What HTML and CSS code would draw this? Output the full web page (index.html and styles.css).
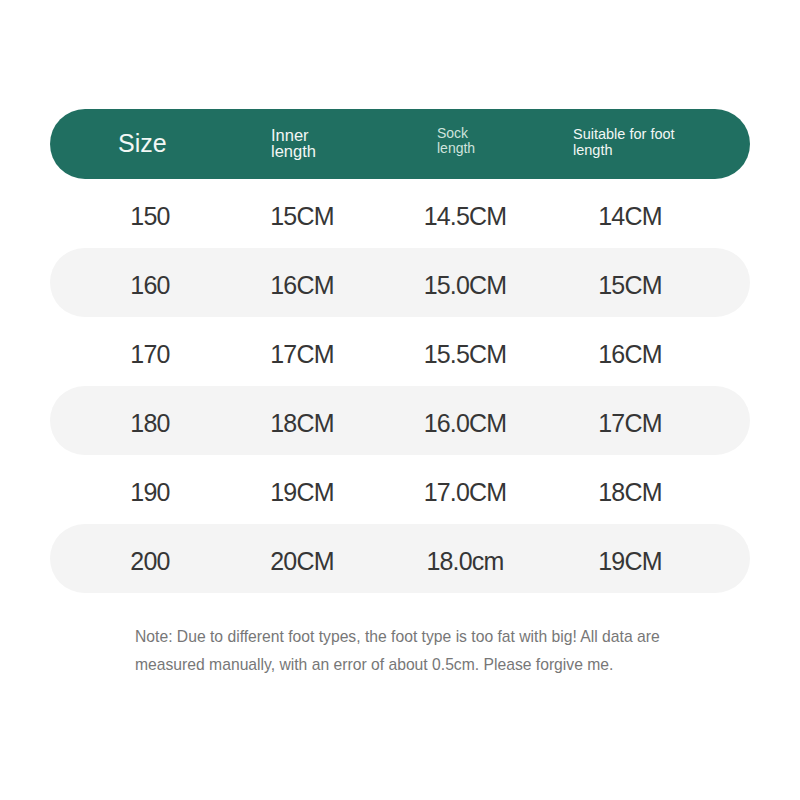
FILE: index.html
```html
<!DOCTYPE html>
<html>
<head>
<meta charset="utf-8">
<link rel="stylesheet" href="styles.css">
</head>
<body>
<div class="table">
  <div class="head">
    <div class="h-size">Size</div>
    <div class="h-inner">Inner<br>length</div>
    <div class="h-sock">Sock<br>length</div>
    <div class="h-suit">Suitable for foot<br>length</div>
  </div>
  <div class="row"><span>150</span><span>15CM</span><span>14.5CM</span><span>14CM</span></div>
  <div class="row band"><span>160</span><span>16CM</span><span>15.0CM</span><span>15CM</span></div>
  <div class="row"><span>170</span><span>17CM</span><span>15.5CM</span><span>16CM</span></div>
  <div class="row band"><span>180</span><span>18CM</span><span>16.0CM</span><span>17CM</span></div>
  <div class="row"><span>190</span><span>19CM</span><span>17.0CM</span><span>18CM</span></div>
  <div class="row band"><span>200</span><span>20CM</span><span>18.0cm</span><span>19CM</span></div>
</div>
<p class="note">Note: Due to different foot types, the foot type is too fat with big! All data are<br>measured manually, with an error of about 0.5cm. Please forgive me.</p>
</body>
</html>
```
FILE: styles.css
```css
html, body {
  margin: 0;
  padding: 0;
  background: #ffffff;
  font-family: "Liberation Sans", Arial, sans-serif;
}
.table {
  width: 700px;
  margin: 109px 0 0 50px;
}
.head {
  height: 70px;
  border-radius: 35px;
  background: #206f61;
  color: #f2f7f5;
  display: grid;
  grid-template-columns: 153px 166px 136px 1fr;
  align-items: center;
  padding-left: 68px;
  box-sizing: border-box;
}
.h-size {
  font-size: 25px;
  margin-top: -2px;
}
.h-inner {
  font-size: 16.5px;
  line-height: 16.5px;
  margin-top: -2px;
}
.h-sock {
  font-size: 14px;
  line-height: 15px;
  color: #cfe3dd;
  margin-top: -6px;
}
.h-suit {
  font-size: 14.5px;
  line-height: 16px;
  margin-top: -4px;
}
.row {
  height: 69px;
  display: grid;
  grid-template-columns: 152px 152px 174px 156px;
  padding-left: 24px;
  padding-top: 6px;
  box-sizing: border-box;
  align-items: center;
  font-size: 25px;
  color: #363636;
  letter-spacing: -0.8px;
}
.row span {
  text-align: center;
}
.band {
  background: #f4f4f4;
  border-radius: 35px;
}
.note {
  margin: 30px 0 0 135px;
  font-size: 15.7px;
  line-height: 28px;
  color: #777777;
}
```
